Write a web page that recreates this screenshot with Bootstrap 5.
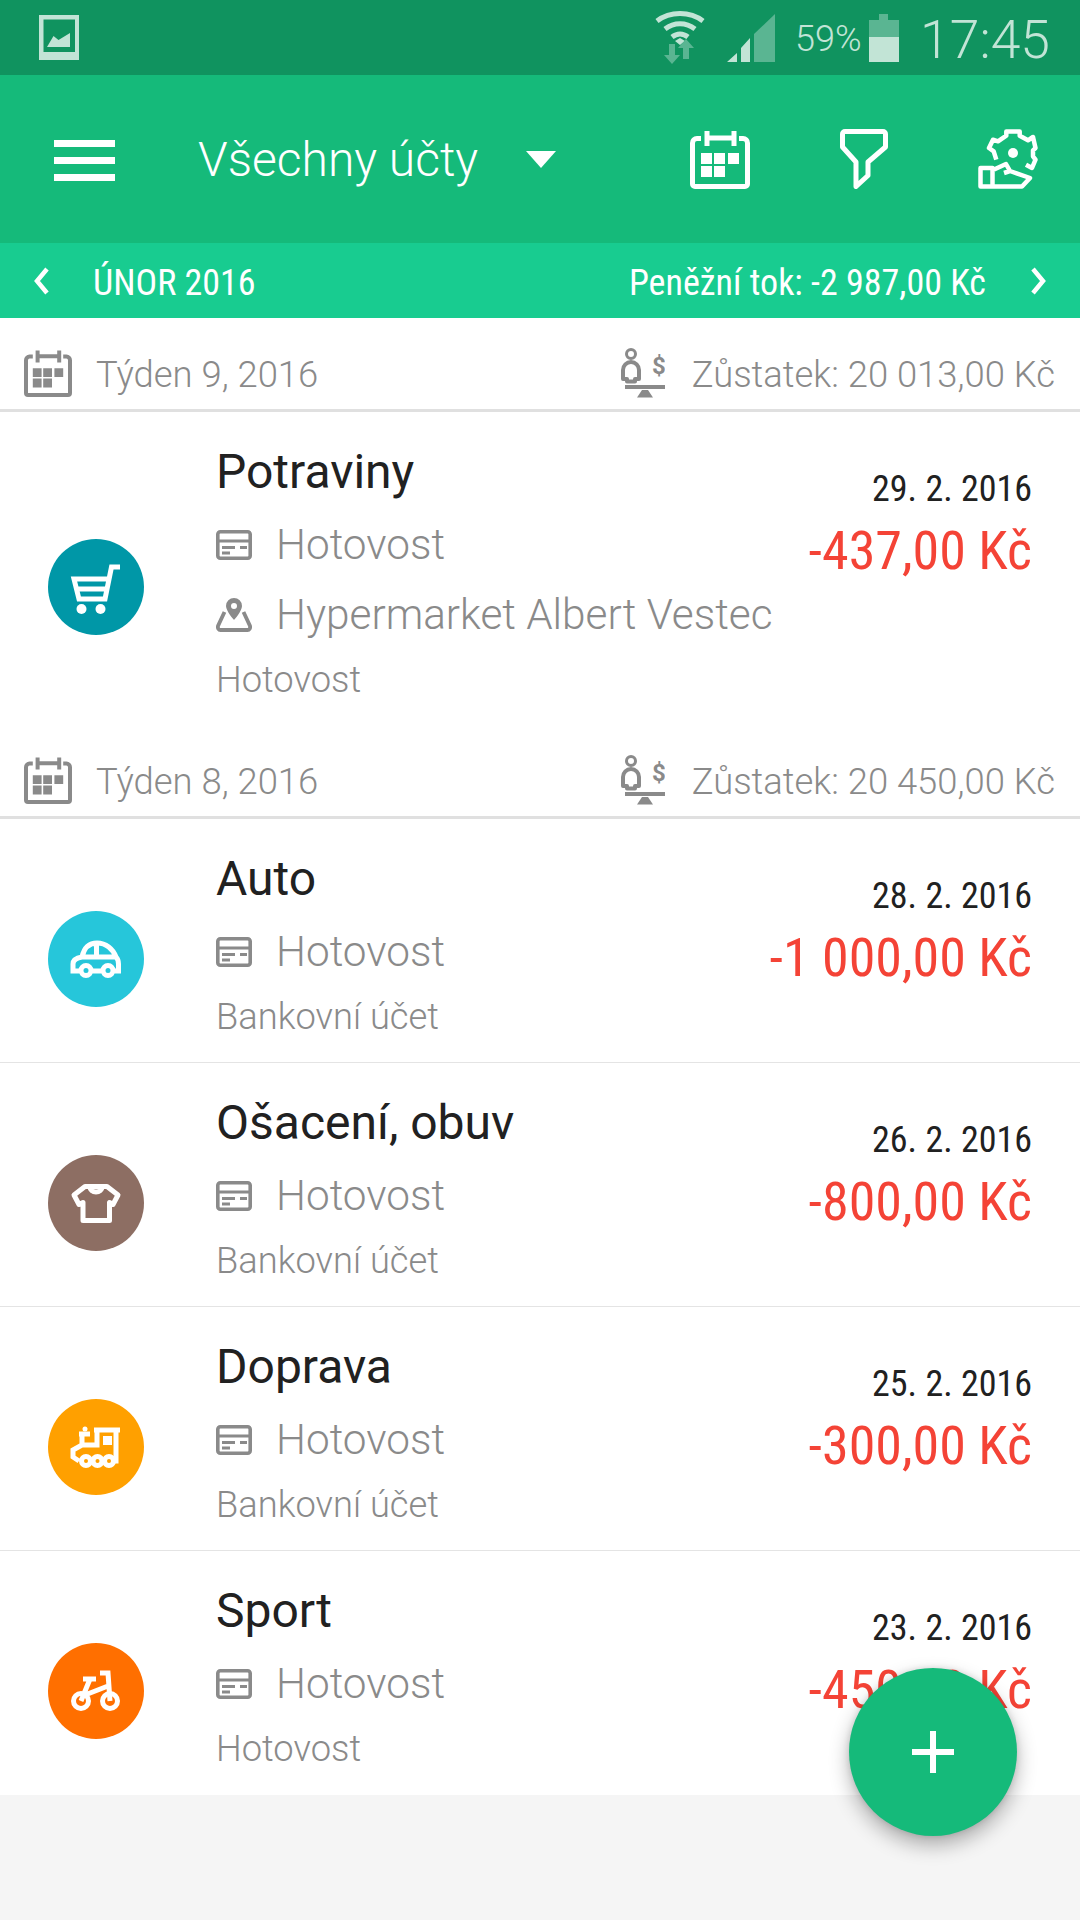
<!DOCTYPE html>
<html lang="cs">
<head>
  <meta charset="UTF-8" />
  <meta name="viewport" content="width=device-width, initial-scale=1" />
  <title>Všechny účty</title>
  <link href="https://cdn.jsdelivr.net/npm/bootstrap@5.3.0/dist/css/bootstrap.min.css" rel="stylesheet" />
  <style>
    body {
      font-family: Roboto, "Noto Sans", sans-serif;
      background: #f5f5f5;
      width: 1080px;
      height: 1920px;
      overflow: hidden;
      position: relative;
    }
    .cond {
      font-family: "Roboto Condensed", "Liberation Sans Narrow", Roboto, sans-serif;
      font-stretch: condensed;
    }
    .status-bar {
      height: 75px;
      background: #10935f;
      color: #c2e4d6;
      padding: 0 30px 0 39px;
    }
    .status-wifi { margin-right: 22px; }
    .status-pct { font-size: 36px; font-weight: 300; margin: 0 9px 0 20px; width: 65px; white-space: nowrap; line-height: 75px; padding-top: 3px; }
    .status-time { font-size: 53.500px; font-weight: 300; margin-left: 21px; line-height: 75px; padding-top: 3px; }
    .app-bar {
      height: 168px;
      background: #15ba7a;
      padding: 0 !important;
      color: #fff;
    }
    .burger { margin-left: 54px; width: 61px; margin-top: 2px; }
    .burger i { display: block; height: 7px; background: #fff; margin-bottom: 10px; }
    .burger i:last-child { margin-bottom: 0; }
    .acct-title { font-size: 48px; font-weight: 300; margin-left: 83px; width: 328px; white-space: nowrap; padding-top: 2px; }
    .acct-caret { width: 30px; height: 17px; }
    .top-icons { margin-left: auto; }
    .month-bar {
      height: 75px;
      background: #18cc90;
      color: #fff;
      padding: 0 33px;
      font-size: 36px;
    }
    .month-bar span { padding-top: 5px; }
    .month-label { margin-left: 43px; }
    .week-head {
      height: 94px;
      background: #fff;
      border-bottom: 3px solid #e0e0e0;
      padding: 24px 25px 0 24px;
      color: #8a8a8a;
      font-size: 36.400px;
      font-weight: 300;
    }
    .week-head svg { margin-bottom: 6px; }
    .week-cal { margin-right: 24px; }
    .week-scale { margin-right: 27px; }
    .tx-list { background: #fff; }
    .list-group-item.tx-row {
      padding: 0 48px 0 0;
      border-color: #e4e4e4;
      border-width: 0 0 1px;
      min-height: 244px;
    }
    .list-group-item.tx-row.tx-plain { border-bottom: 0; min-height: 0; }
    .tx-iconwrap { width: 216px; padding: 36px 0 0 48px; flex-shrink: 0; }
    .tx-circle { width: 96px; height: 96px; }
    .tx-body { padding-top: 31px; }
    .tx-name { font-size: 48px; line-height: 58px; color: #212121; margin-bottom: 9px; }
    .tx-sub { font-size: 42.300px; line-height: 70px; font-weight: 300; color: #8a8a8a; white-space: nowrap; }
    .tx-sub svg { margin-right: 24px; }
    .tx-note { font-size: 36.300px; line-height: 50px; font-weight: 300; color: #8a8a8a; margin-top: 5px; padding-bottom: 20px; }
    .tx-date { font-size: 36px; line-height: 48px; color: #212121; margin-top: 53px; }
    .tx-amount { font-size: 54px; line-height: 66px; color: #f44336; margin-top: 5px; white-space: nowrap; }
    .fab {
      position: absolute;
      left: 849px;
      top: 1668px;
      width: 168px;
      height: 168px;
      padding: 0;
      border: 0;
      background: #15ba7a;
      box-shadow: 0 9px 20px rgba(0, 0, 0, .3), 0 0 6px rgba(0, 0, 0, .12);
    }
    .fab:hover { background: #15ba7a; }
  </style>
</head>
<body>

  <svg width="0" height="0" class="position-absolute">
    <symbol id="ico-cal" viewBox="0 0 60 60">
      <path d="M11 9.500H7a4.500 4.500 0 0 0-4.500 4.500v41A2.500 2.500 0 0 0 5 57.500h50a2.500 2.500 0 0 0 2.500-2.500V14A4.500 4.500 0 0 0 53 9.500h-4M17 2v15M44 2v15M17 9h27" fill="none" stroke="currentColor" stroke-width="5"/>
      <path d="M11 24h11v11H11zM24 24h11v11H24zM38 24h11v11H38zM11 37h11v11H11zM24 37h11v11H24z" fill="currentColor"/>
    </symbol>
    <symbol id="ico-card" viewBox="0 0 36 30">
      <rect x="1.800" y="1.800" width="32.400" height="26.400" rx="2.500" fill="none" stroke="currentColor" stroke-width="3.600"/>
      <path d="M3 9.500h30v3H3zM6 16h13v3H6zM24 16h7v3h-7zM6 21.500h8v3H6z" fill="currentColor"/>
    </symbol>
    <symbol id="ico-pin" viewBox="0 0 36 34">
      <path d="M18 0a8 8 0 0 0-8 8C10 13 18 22 18 22s8-9 8-14a8 8 0 0 0-8-8zm0 5a3 3 0 1 1 0 6 3 3 0 0 1 0-6z" fill="currentColor"/>
      <path d="M8.500 14 2 28c-.5 2 .5 4 2.500 4h27c2 0 3-2 2.500-4L27.500 14" fill="none" stroke="currentColor" stroke-width="3.800"/>
    </symbol>
  </svg>

  <!-- system status bar -->
  <div class="status-bar d-flex align-items-center">
    <svg width="40" height="45" viewBox="0 0 40 45">
      <rect width="40" height="45" fill="#c2e4d6"/>
      <rect x="4.500" y="4.500" width="31.500" height="32.500" fill="#10935f"/>
      <path d="M8 32 14.500 21l5 4L31 18v14z" fill="#c2e4d6"/>
    </svg>
    <div class="ms-auto d-flex align-items-center">
      <svg width="50" height="55" viewBox="0 0 50 55" class="status-wifi">
        <path d="M2 11C15 1 35 1 48 11M10 19C19 12 31 12 40 19M17 27C22 23 28 23 33 27" fill="none" stroke="#c2e4d6" stroke-width="5"/>
        <path d="M20 31l5-3 5 3-5 4z" fill="#c2e4d6"/>
        <path d="M14 34h6v11h5l-8 9-8-9h5zM28 49V38h-5l8-9 8 9h-5v11z" fill="#5ab592"/>
      </svg>
      <svg width="48" height="48" viewBox="0 0 48 48">
        <path d="M0 48l10-9v9zM14 48V34l9-10v24z" fill="#c2e4d6"/>
        <path d="M27 48V20L48 0v48z" fill="#5ab592"/>
      </svg>
      <span class="status-pct">59%</span>
      <svg width="30" height="48" viewBox="0 0 30 48">
        <path d="M10 0h9v6h11v17H0V6h10z" fill="#5ab592"/>
        <rect y="23" width="30" height="25" fill="#c2e4d6"/>
      </svg>
      <span class="status-time">17:45</span>
    </div>
  </div>

  <!-- app toolbar -->
  <nav class="navbar app-bar flex-nowrap align-items-center">
    <div class="burger"><i></i><i></i><i></i></div>
    <span class="acct-title">Všechny účty</span>
    <svg class="acct-caret" viewBox="0 0 30 17"><path d="M0 0h30L15 17z" fill="#fff"/></svg>
    <div class="top-icons d-flex align-items-center">
      <svg width="60" height="60" class="text-white" style="margin-right:90px"><use href="#ico-cal"/></svg>
      <svg width="48" height="60" viewBox="0 0 48 60" style="margin-right:90px">
        <path d="M5 2.500h38a2.500 2.500 0 0 1 2.500 2.500v13L28 33v13.500L16 57.500V33L2.500 18V5A2.500 2.500 0 0 1 5 2.500z" fill="none" stroke="#fff" stroke-width="5" stroke-linejoin="round"/>
      </svg>
      <svg width="60" height="60" viewBox="0 0 60 60" style="margin-right:42px">
        <path d="M18.300 30.700 15.700 22.300 11 19l4-8.300 5 1.600 8.300-5.600V2.500h13.400v4.200l8.300 4.600 5-3.300 2.500 11-2.500 2.300v6l2.500 3.400L54 39l-6-3.300" fill="none" stroke="#fff" stroke-width="4.500" stroke-linejoin="round"/>
        <circle cx="35" cy="24" r="5" fill="#fff"/>
        <path d="M2.500 39h12v18.500h-12zM15 41l13-6 4 7-6 2M32 42l20 7-8 8.500H15" fill="none" stroke="#fff" stroke-width="4.500" stroke-linejoin="round"/>
      </svg>
    </div>
  </nav>

  <!-- month switcher -->
  <div class="month-bar cond d-flex align-items-center">
    <svg width="17" height="28" viewBox="0 0 17 28"><path d="M14 2 4 14l10 12" fill="none" stroke="#fff" stroke-width="4.500"/></svg>
    <span class="month-label">ÚNOR 2016</span>
    <span class="ms-auto">Peněžní tok: -2 987,00 Kč</span>
    <svg width="17" height="28" viewBox="0 0 17 28" style="margin-left:44px"><path d="M3 2l10 12L3 26" fill="none" stroke="#fff" stroke-width="4.500"/></svg>
  </div>

  <!-- week 9 -->
  <div class="week-head d-flex align-items-center">
    <svg width="48" height="48" class="week-cal"><use href="#ico-cal"/></svg>
    <span>Týden 9, 2016</span>
    <svg width="44" height="50" viewBox="0 0 44 50" class="week-scale ms-auto">
      <circle cx="10" cy="6" r="4.500" fill="none" stroke="currentColor" stroke-width="3"/>
      <path d="M2 31v-9a8 8 0 0 1 16 0v9h-4v2.500H6V31z" fill="none" stroke="currentColor" stroke-width="4" stroke-linejoin="round"/>
      <text x="38" y="26" font-family="Roboto, sans-serif" font-size="24" font-weight="700" text-anchor="middle" fill="currentColor">$</text>
      <path d="M4 37h40v4H4zM21 42h6l5 7.500H16z" fill="currentColor"/>
    </svg>
    <span>Zůstatek: 20 013,00 Kč</span>
  </div>
  <ul class="list-group list-group-flush tx-list rounded-0">
    <li class="list-group-item tx-row tx-plain d-flex">
      <div class="tx-iconwrap d-flex align-items-center">
        <div class="tx-circle rounded-circle" style="background:#0097a7">
          <svg width="96" height="96" viewBox="0 0 96 96">
            <path d="M72 28H63.500L57 60H31L26 40H61M28 50h31" fill="none" stroke="#fff" stroke-width="5"/>
            <circle cx="33.500" cy="70" r="5" fill="#fff"/><circle cx="52.500" cy="70" r="5" fill="#fff"/>
          </svg>
        </div>
      </div>
      <div class="tx-body flex-grow-1">
        <div class="tx-name">Potraviny</div>
        <div class="tx-sub d-flex align-items-center"><svg width="36" height="30"><use href="#ico-card"/></svg>Hotovost</div>
        <div class="tx-sub d-flex align-items-center"><svg width="36" height="34"><use href="#ico-pin"/></svg>Hypermarket Albert Vestec</div>
        <div class="tx-note">Hotovost</div>
      </div>
      <div class="text-end cond">
        <div class="tx-date">29. 2. 2016</div>
        <div class="tx-amount">-437,00 Kč</div>
      </div>
    </li>
  </ul>

  <!-- week 8 -->
  <div class="week-head d-flex align-items-center">
    <svg width="48" height="48" class="week-cal"><use href="#ico-cal"/></svg>
    <span>Týden 8, 2016</span>
    <svg width="44" height="50" viewBox="0 0 44 50" class="week-scale ms-auto">
      <circle cx="10" cy="6" r="4.500" fill="none" stroke="currentColor" stroke-width="3"/>
      <path d="M2 31v-9a8 8 0 0 1 16 0v9h-4v2.500H6V31z" fill="none" stroke="currentColor" stroke-width="4" stroke-linejoin="round"/>
      <text x="38" y="26" font-family="Roboto, sans-serif" font-size="24" font-weight="700" text-anchor="middle" fill="currentColor">$</text>
      <path d="M4 37h40v4H4zM21 42h6l5 7.500H16z" fill="currentColor"/>
    </svg>
    <span>Zůstatek: 20 450,00 Kč</span>
  </div>
  <ul class="list-group list-group-flush tx-list rounded-0">
    <li class="list-group-item tx-row d-flex">
      <div class="tx-iconwrap d-flex align-items-center">
        <div class="tx-circle rounded-circle" style="background:#26c6da">
          <svg width="96" height="96" viewBox="0 0 96 96" fill="none" stroke="#fff" stroke-width="5">
            <path d="M31 60H25V53C25 49 28 47 34 46C36 37 41 32 49 32C58 32 65 38 68 46C70 48 70.500 50 70.500 53V60H67M45 60H53M34 46H68M48.500 32V46"/>
            <circle cx="38" cy="59.500" r="5"/><circle cx="60" cy="59.500" r="5"/>
          </svg>
        </div>
      </div>
      <div class="tx-body flex-grow-1">
        <div class="tx-name">Auto</div>
        <div class="tx-sub d-flex align-items-center"><svg width="36" height="30"><use href="#ico-card"/></svg>Hotovost</div>
        <div class="tx-note">Bankovní účet</div>
      </div>
      <div class="text-end cond">
        <div class="tx-date">28. 2. 2016</div>
        <div class="tx-amount">-1 000,00 Kč</div>
      </div>
    </li>
    <li class="list-group-item tx-row d-flex">
      <div class="tx-iconwrap d-flex align-items-center">
        <div class="tx-circle rounded-circle" style="background:#8d6e63">
          <svg width="96" height="96" viewBox="0 0 96 96" fill="none" stroke="#fff" stroke-width="5" stroke-linejoin="round">
            <path d="M37 31.500H59L70 40L65 49.500L61.500 47.500V65.500H35V47.500L31 49.500L26 40Z"/>
            <path d="M42 32a6 5 0 0 0 12 0"/>
          </svg>
        </div>
      </div>
      <div class="tx-body flex-grow-1">
        <div class="tx-name">Ošacení, obuv</div>
        <div class="tx-sub d-flex align-items-center"><svg width="36" height="30"><use href="#ico-card"/></svg>Hotovost</div>
        <div class="tx-note">Bankovní účet</div>
      </div>
      <div class="text-end cond">
        <div class="tx-date">26. 2. 2016</div>
        <div class="tx-amount">-800,00 Kč</div>
      </div>
    </li>
    <li class="list-group-item tx-row d-flex">
      <div class="tx-iconwrap d-flex align-items-center">
        <div class="tx-circle rounded-circle" style="background:#ffa000">
          <svg width="96" height="96" viewBox="0 0 96 96" fill="none" stroke="#fff" stroke-width="5">
            <path d="M46 31H72M68 31V62H66M49 31V46H34V35M31 35H42M34 46L25 51V58L31 62M44 62h1M54 62h2"/>
            <path d="M55 37h9v9h-9z" fill="#fff" stroke="none"/>
            <circle cx="37" cy="30" r="2.500" fill="#fff" stroke="none"/>
            <circle cx="38" cy="62" r="4.500"/><circle cx="49.500" cy="62" r="4.500"/><circle cx="61" cy="62" r="4.500"/>
          </svg>
        </div>
      </div>
      <div class="tx-body flex-grow-1">
        <div class="tx-name">Doprava</div>
        <div class="tx-sub d-flex align-items-center"><svg width="36" height="30"><use href="#ico-card"/></svg>Hotovost</div>
        <div class="tx-note">Bankovní účet</div>
      </div>
      <div class="text-end cond">
        <div class="tx-date">25. 2. 2016</div>
        <div class="tx-amount">-300,00 Kč</div>
      </div>
    </li>
    <li class="list-group-item tx-row d-flex">
      <div class="tx-iconwrap d-flex align-items-center">
        <div class="tx-circle rounded-circle" style="background:#ff6f00">
          <svg width="96" height="96" viewBox="0 0 96 96" fill="none" stroke="#fff" stroke-width="5">
            <circle cx="33" cy="58" r="7.500"/><circle cx="62" cy="58" r="7.500"/>
            <path d="M35 36H48M52 30H60L62 58M42 36L33 58M37 52L60 43"/>
          </svg>
        </div>
      </div>
      <div class="tx-body flex-grow-1">
        <div class="tx-name">Sport</div>
        <div class="tx-sub d-flex align-items-center"><svg width="36" height="30"><use href="#ico-card"/></svg>Hotovost</div>
        <div class="tx-note">Hotovost</div>
      </div>
      <div class="text-end cond">
        <div class="tx-date">23. 2. 2016</div>
        <div class="tx-amount">-450,00 Kč</div>
      </div>
    </li>
  </ul>

  <button class="btn fab rounded-circle d-flex align-items-center justify-content-center" type="button" aria-label="Přidat">
    <svg width="42" height="42" viewBox="0 0 42 42"><path d="M18 0h6v18h18v6H24v18h-6V24H0v-6h18z" fill="#fff"/></svg>
  </button>

  <script src="https://cdn.jsdelivr.net/npm/bootstrap@5.3.0/dist/js/bootstrap.bundle.min.js"></script>
</body>
</html>
